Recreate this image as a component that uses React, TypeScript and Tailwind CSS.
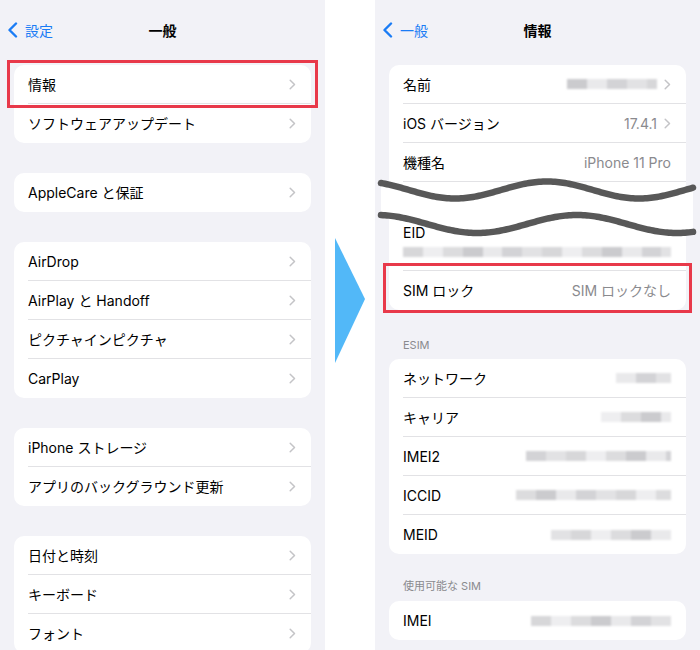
import React from 'react';

const shades = [
  'bg-[#e2e2e4]',
  'bg-[#d3d3d6]',
  'bg-[#e9e9eb]',
  'bg-[#cbcbce]',
  'bg-[#dcdcde]',
  'bg-[#eeeef0]',
  'bg-[#d7d7d9]',
];

const Mosaic = ({ width, seed = 0 }: { width: number; seed?: number }) => {
  const count = Math.round(width / 5);
  return (
    <div className="flex h-[10px] blur-[0.8px]">
      {Array.from({ length: count }).map((_, i) => (
        <span
          key={i}
          className={`h-full w-[5px] ${shades[(i * 5 + seed * 3 + (i % 4) * 2) % shades.length]}`}
        />
      ))}
    </div>
  );
};

const Chevron = () => (
  <svg width="7" height="11" viewBox="0 0 7 11" className="shrink-0">
    <path
      d="M1.2 1.2l4.3 4.3-4.3 4.3"
      fill="none"
      stroke="#c4c4c7"
      strokeWidth="1.5"
      strokeLinecap="round"
      strokeLinejoin="round"
    />
  </svg>
);

const BackChevron = () => (
  <svg width="11" height="16" viewBox="0 0 11 16" className="shrink-0">
    <path
      d="M9 1.5L2.5 8 9 14.5"
      fill="none"
      stroke="#1a7cf5"
      strokeWidth="2.4"
      strokeLinecap="round"
      strokeLinejoin="round"
    />
  </svg>
);

type RowProps = {
  label: string;
  value?: React.ReactNode;
  chevron?: boolean;
  last?: boolean;
};

const Row = ({ label, value, chevron = true, last = false }: RowProps) => (
  <div className="flex h-[39px] items-center pl-[14px]">
    <div
      className={`flex h-full flex-1 items-center gap-[7px] pr-[15px] ${
        last ? '' : 'border-b border-[#e2e2e5]'
      }`}
    >
      <span className="flex-1 text-[14px] text-black">{label}</span>
      {value !== undefined && <span className="text-[14px] text-[#8a8a8e]">{value}</span>}
      {chevron && <Chevron />}
    </div>
  </div>
);

const Card = ({ children }: { children: React.ReactNode }) => (
  <div className="overflow-hidden rounded-[10px] bg-white">{children}</div>
);

const Header = ({ back, title }: { back: string; title: string }) => (
  <div className="grid h-[60px] grid-cols-[1fr_auto_1fr] items-center">
    <div className="flex items-center gap-[7px] pl-[7px] text-[14px] text-[#1a7cf5]">
      <BackChevron />
      <span>{back}</span>
    </div>
    <div className="text-[14px] font-bold text-black">{title}</div>
    <div />
  </div>
);

const wavePath = (mid: number, amp: number, period: number, trough: number) => {
  const pts: string[] = [];
  for (let x = 4; x <= 316; x += 2) {
    const y = mid + amp * Math.cos((2 * Math.PI * (x - trough)) / period);
    pts.push(`${x},${y.toFixed(2)}`);
  }
  return pts;
};

const Waves = () => {
  const top = wavePath(20, 8.5, 184, 78);
  const bottom = wavePath(54, 9, 200, 100);
  const fill = `M${top.join(' L')} L${[...bottom].reverse().join(' L')} Z`;
  return (
    <svg
      width="320"
      height="75"
      viewBox="0 0 320 75"
      className="absolute left-[2px] top-[170px]"
    >
      <path d={fill} fill="#ffffff" />
      <path
        d={`M${top.join(' L')}`}
        fill="none"
        stroke="#585858"
        strokeWidth="6.5"
        strokeLinecap="round"
        strokeLinejoin="round"
      />
      <path
        d={`M${bottom.join(' L')}`}
        fill="none"
        stroke="#585858"
        strokeWidth="6.5"
        strokeLinecap="round"
        strokeLinejoin="round"
      />
    </svg>
  );
};

const SectionLabel = ({ children }: { children: React.ReactNode }) => (
  <div className="h-[14px] pl-[14px] text-[11px] leading-[14px] text-[#8a8a8e]">{children}</div>
);

const App: React.FC = () => {
  return (
    <div className="flex h-[650px] w-[700px] overflow-hidden bg-white font-['Inter','Noto_Sans_CJK_JP',sans-serif]">
      {/* left: 一般 */}
      <div className="relative w-[325px] shrink-0 bg-[#f2f2f7]">
        <Header back="設定" title="一般" />
        <div className="flex flex-col gap-[30px] px-[14px] pt-[5px]">
          <Card>
            <Row label="情報" />
            <Row label="ソフトウェアアップデート" last />
          </Card>
          <Card>
            <Row label="AppleCare と保証" last />
          </Card>
          <Card>
            <Row label="AirDrop" />
            <Row label="AirPlay と Handoff" />
            <Row label="ピクチャインピクチャ" />
            <Row label="CarPlay" last />
          </Card>
          <Card>
            <Row label="iPhone ストレージ" />
            <Row label="アプリのバックグラウンド更新" last />
          </Card>
          <Card>
            <Row label="日付と時刻" />
            <Row label="キーボード" />
            <Row label="フォント" last />
          </Card>
        </div>
        <div className="absolute left-[7px] top-[60px] h-[48px] w-[311px] border-[3px] border-[#e8394a]" />
      </div>

      {/* arrow */}
      <div className="w-[50px] shrink-0 pl-[10px] pt-[238px]">
        <svg width="30" height="125" viewBox="0 0 30 125">
          <polygon points="0,0 30,61 0,125" fill="#52b8f8" />
        </svg>
      </div>

      {/* right: 情報 */}
      <div className="relative w-[325px] shrink-0 bg-[#f2f2f7]">
        <Header back="一般" title="情報" />
        <div className="px-[14px] pt-[5px]">
          <Card>
            <Row label="名前" value={<Mosaic width={90} seed={1} />} />
            <Row label="iOS バージョン" value="17.4.1" />
            <Row label="機種名" value="iPhone 11 Pro" chevron={false} />
            <div className="h-[30px]" />
            <div className="pl-[14px]">
              <div className="border-b border-[#e2e2e5] pb-[13px] pr-[15px] pt-[12px]">
                <div className="h-[17px] text-[14px] leading-[17px] text-black">EID</div>
                <div className="mt-[6px]">
                  <Mosaic width={268} seed={2} />
                </div>
              </div>
            </div>
            <Row label="SIM ロック" value="SIM ロックなし" chevron={false} last />
          </Card>

          <div className="mt-[28px]">
            <SectionLabel>ESIM</SectionLabel>
          </div>
          <div className="mt-[7px]">
            <Card>
              <Row label="ネットワーク" value={<Mosaic width={57} seed={3} />} chevron={false} />
              <Row label="キャリア" value={<Mosaic width={72} seed={4} />} chevron={false} />
              <Row label="IMEI2" value={<Mosaic width={143} seed={5} />} chevron={false} />
              <Row label="ICCID" value={<Mosaic width={157} seed={6} />} chevron={false} />
              <Row label="MEID" value={<Mosaic width={122} seed={0} />} chevron={false} last />
            </Card>
          </div>

          <div className="mt-[25px]">
            <SectionLabel>使用可能な SIM</SectionLabel>
          </div>
          <div className="mt-[8px]">
            <Card>
              <Row label="IMEI" value={<Mosaic width={142} seed={2} />} chevron={false} last />
            </Card>
          </div>
        </div>
        <Waves />
        <div className="absolute left-[8px] top-[263px] h-[50px] w-[309px] border-[3px] border-[#e8394a]" />
      </div>
    </div>
  );
};

export default App;
